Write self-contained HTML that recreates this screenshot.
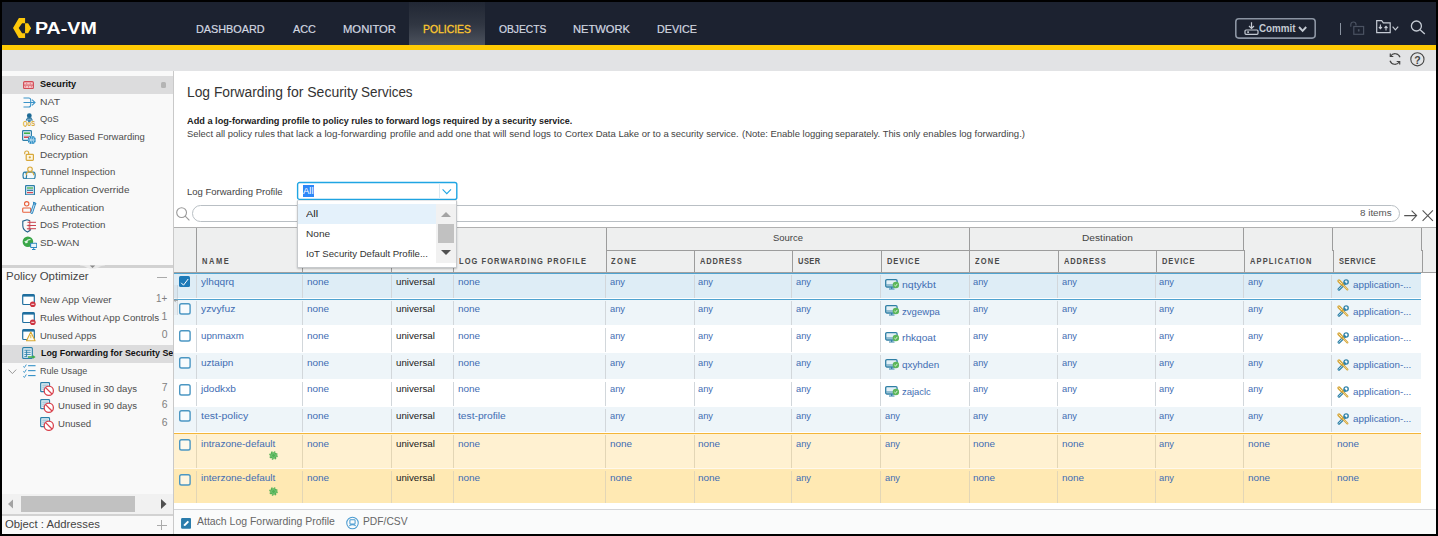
<!DOCTYPE html><html><head><meta charset="utf-8"><title>PA-VM</title><style>

html,body{margin:0;padding:0;}
body{width:1438px;height:536px;background:#000;position:relative;overflow:hidden;font-family:"Liberation Sans", sans-serif;}
#app div,#app svg,#app span{position:absolute;}
#app span{white-space:nowrap;line-height:1;}
#app span i{display:inline-block;width:0;height:0;position:static;}

</style></head><body><div id="app">
<div style="left:2px;top:2px;width:1434px;height:532px;background:#fff;"></div>
<div style="left:2px;top:2px;width:1434px;height:43px;background:#1c2230;"></div>
<div style="left:409px;top:2px;width:76px;height:43px;background:linear-gradient(#212734 0%,#303642 52%,#4c525d 100%);"></div>
<div style="left:2px;top:45px;width:1434px;height:5px;background:#ffcb05;"></div>
<div style="left:2px;top:50px;width:1434px;height:21px;background:#e2e3e5;"></div>
<svg style="left:12.9px;top:17.9px" width="18.2" height="20.4" viewBox="0 0 18.2 20.4"><path d="M5.900 0H12.100V5.200H9.100L5.700 10.100L9.100 15.300H12.100V20.300H5.900L0 10.100Z" fill="#fdc80a"/><path d="M12.100 5.200H15.100L18.100 10.100L15.100 15.300H12.100Z" fill="#fdc80a"/></svg>
<span style="left:35.13px;top:21.00px;font-size:16.8px;font-weight:700;color:#fff;transform:scaleX(1.1685);transform-origin:0 0;">PA-VM</span>
<span style="left:196.26px;top:24.00px;font-size:11px;font-weight:400;color:#d3d8e0;transform:scaleX(0.9849);transform-origin:0 0;-webkit-text-stroke:0.2px #d3d8e0;">DASHBOARD</span>
<span style="left:292.66px;top:24.00px;font-size:11px;font-weight:400;color:#d3d8e0;transform:scaleX(0.9828);transform-origin:0 0;-webkit-text-stroke:0.2px #d3d8e0;">ACC</span>
<span style="left:342.56px;top:24.00px;font-size:11px;font-weight:400;color:#d3d8e0;transform:scaleX(1.0229);transform-origin:0 0;-webkit-text-stroke:0.2px #d3d8e0;">MONITOR</span>
<span style="left:422.56px;top:24.00px;font-size:11px;font-weight:400;color:#fdc82f;transform:scaleX(0.9445);transform-origin:0 0;-webkit-text-stroke:0.3px #fdc82f;">POLICIES</span>
<span style="left:498.56px;top:24.00px;font-size:11px;font-weight:400;color:#d3d8e0;transform:scaleX(0.9350);transform-origin:0 0;-webkit-text-stroke:0.2px #d3d8e0;">OBJECTS</span>
<span style="left:572.56px;top:24.00px;font-size:11px;font-weight:400;color:#d3d8e0;transform:scaleX(1.0125);transform-origin:0 0;-webkit-text-stroke:0.2px #d3d8e0;">NETWORK</span>
<span style="left:656.56px;top:24.00px;font-size:11px;font-weight:400;color:#d3d8e0;transform:scaleX(0.9748);transform-origin:0 0;-webkit-text-stroke:0.2px #d3d8e0;">DEVICE</span>
<svg style="left:1234px;top:17px" width="83" height="23" viewBox="0 0 83 23" fill="none"><rect x="1.800" y="1.800" width="79.400" height="19.300" rx="3" stroke="#8b94a2" stroke-width="1.600"/></svg>
<svg style="left:1243.500px;top:22px" width="15" height="13" viewBox="0 0 15 13" fill="none" stroke="#c5cbd4" stroke-width="1.200"><path d="M7.500 0.300v6M5 4L7.500 6.500L10 4"/><rect x="1" y="8" width="13" height="4.300" rx="1"/><path d="M3.300 10.200h1.600" stroke-width="1.800"/></svg>
<span style="left:1259.38px;top:23.00px;font-size:10.5px;font-weight:700;color:#c5cbd4;transform:scaleX(0.9360);transform-origin:0 0;">Commit</span>
<svg style="left:1298px;top:25.500px" width="9" height="7" viewBox="0 0 9 7" fill="none" stroke="#c5cbd4" stroke-width="1.900"><path d="M1 1L4.600 4.800L8.200 1"/></svg>
<div style="left:1340px;top:23px;width:1px;height:11.5px;background:#8a93a0;"></div>
<svg style="left:1350px;top:21px" width="15" height="14" viewBox="0 0 15 14" fill="none" stroke="#4a5261" stroke-width="1.200"><path d="M0.800 5.800V3.600a2.600 2.600 0 0 1 5.200 0v1"/><rect x="3.800" y="5.500" width="9.800" height="7.800"/><path d="M8.700 8.200v2.300" stroke-width="1.600"/></svg>
<svg style="left:1375.500px;top:20px" width="15" height="13.500" viewBox="0 0 15 13.500" fill="none" stroke="#c5cbd4" stroke-width="1.200"><path d="M0.700 12.600V0.700h5l1.600 2.200h6.900v9.700z"/><path d="M4.400 4.500v4M2.900 7l1.500 1.600L5.900 7M10 10.500v-4M8.500 8L10 6.400 11.500 8" stroke-width="1.100"/></svg>
<svg style="left:1392px;top:25.500px" width="7" height="5" viewBox="0 0 7 5" fill="none" stroke="#c5cbd4" stroke-width="1.200"><path d="M0.600 0.600L3.400 3.800L6.200 0.600"/></svg>
<svg style="left:1410px;top:20px" width="16" height="16" viewBox="0 0 16 16" fill="none" stroke="#c5cbd4" stroke-width="1.300"><circle cx="6.400" cy="6" r="5"/><path d="M10.100 9.700L14.800 14"/></svg>
<svg style="left:1388px;top:52px" width="14" height="14" viewBox="0 0 14 14" fill="none" stroke="#444" stroke-width="1.200"><path d="M12 5.200A5.200 5.200 0 0 0 2.600 4.300"/><path d="M2 8.800A5.200 5.200 0 0 0 11.400 9.700"/><path d="M2.300 1.500v3h3M11.700 12.500v-3h-3"/></svg>
<svg style="left:1409.500px;top:51.600px" width="15" height="15" viewBox="0 0 15 15" fill="none" stroke="#444" stroke-width="1.100"><circle cx="7.400" cy="7.300" r="6.600"/></svg>
<span style="left:1414.20px;top:55.00px;font-size:10.5px;font-weight:700;color:#444;">?</span>
<div style="left:2px;top:71px;width:171px;height:463px;background:#f9f9f9;"></div>
<div style="left:2px;top:76px;width:171px;height:18px;background:#dcdcdd;"></div>
<div style="left:161px;top:82px;width:5px;height:6px;background:#b4b4b4;border-radius:1.500px"></div>
<span style="left:39.92px;top:79.00px;font-size:9.6px;font-weight:700;color:#111;transform:scaleX(0.9562);transform-origin:0 0;">Security</span>
<span style="left:39.92px;top:97.00px;font-size:9.6px;font-weight:400;color:#4d4d4d;transform:scaleX(1.0829);transform-origin:0 0;">NAT</span>
<span style="left:39.92px;top:114.00px;font-size:9.6px;font-weight:400;color:#4d4d4d;transform:scaleX(0.9694);transform-origin:0 0;">QoS</span>
<span style="left:39.92px;top:132.00px;font-size:9.6px;font-weight:400;color:#4d4d4d;transform:scaleX(0.9877);transform-origin:0 0;">Policy Based Forwarding</span>
<span style="left:39.92px;top:150.00px;font-size:9.6px;font-weight:400;color:#4d4d4d;transform:scaleX(1.0427);transform-origin:0 0;">Decryption</span>
<span style="left:39.92px;top:167.00px;font-size:9.6px;font-weight:400;color:#4d4d4d;transform:scaleX(0.9977);transform-origin:0 0;">Tunnel Inspection</span>
<span style="left:39.92px;top:185.00px;font-size:9.6px;font-weight:400;color:#4d4d4d;transform:scaleX(1.0350);transform-origin:0 0;">Application Override</span>
<span style="left:39.92px;top:203.00px;font-size:9.6px;font-weight:400;color:#4d4d4d;transform:scaleX(1.0560);transform-origin:0 0;">Authentication</span>
<span style="left:39.92px;top:220.00px;font-size:9.6px;font-weight:400;color:#4d4d4d;transform:scaleX(1.0153);transform-origin:0 0;">DoS Protection</span>
<span style="left:39.92px;top:238.00px;font-size:9.6px;font-weight:400;color:#4d4d4d;transform:scaleX(1.0221);transform-origin:0 0;">SD-WAN</span>
<div style="left:2px;top:265px;width:171px;height:3px;background:#d2d2d2;"></div>
<svg style="left:80px;top:264px" width="25" height="5" viewBox="0 0 25 5"><path d="M0 1.500C6 1.500 6 4.800 12.500 4.800S19 1.500 25 1.500V1H0z" fill="#e9e9e9"/><path d="M9.800 1.500h5.400L12.500 4z" fill="#8a8a8a"/></svg>
<span style="left:5.85px;top:271.00px;font-size:11.2px;font-weight:400;color:#444;transform:scaleX(1.0226);transform-origin:0 0;">Policy Optimizer</span>
<div style="left:157px;top:276.5px;width:9.5px;height:1px;background:#aaa;"></div>
<span style="left:40.32px;top:295.00px;font-size:9.6px;font-weight:400;color:#4d4d4d;transform:scaleX(1.0199);transform-origin:0 0;">New App Viewer</span>
<span style="left:156.03px;top:294.00px;font-size:10.4px;font-weight:400;color:#808080;transform:scaleX(0.9500);transform-origin:0 0;">1+</span>
<span style="left:40.32px;top:313.00px;font-size:9.6px;font-weight:400;color:#4d4d4d;transform:scaleX(1.0154);transform-origin:0 0;">Rules Without App Controls</span>
<span style="left:161.52px;top:312.00px;font-size:10.4px;font-weight:400;color:#808080;">1</span>
<span style="left:40.32px;top:331.00px;font-size:9.6px;font-weight:400;color:#4d4d4d;transform:scaleX(0.9884);transform-origin:0 0;">Unused Apps</span>
<span style="left:161.82px;top:330.00px;font-size:10.4px;font-weight:400;color:#808080;">0</span>
<div style="left:2px;top:345px;width:171px;height:17.5px;background:#dcdcdd;"></div>
<span style="left:40.60px;top:348.00px;font-size:9.6px;font-weight:700;color:#111;transform:scaleX(0.9260);transform-origin:0 0;">Log Forwarding for Security Services</span>
<span style="left:40.22px;top:366.00px;font-size:9.6px;font-weight:400;color:#4d4d4d;transform:scaleX(0.9417);transform-origin:0 0;">Rule Usage</span>
<svg style="left:8px;top:369px" width="9" height="6" viewBox="0 0 9 6" fill="none" stroke="#9a9a9a" stroke-width="1"><path d="M0.600 0.600L4.400 4.600L8.200 0.600"/></svg>
<span style="left:57.52px;top:384.00px;font-size:9.6px;font-weight:400;color:#4d4d4d;transform:scaleX(0.9930);transform-origin:0 0;">Unused in 30 days</span>
<span style="left:161.72px;top:383.00px;font-size:10.4px;font-weight:400;color:#808080;">7</span>
<span style="left:57.52px;top:401.00px;font-size:9.6px;font-weight:400;color:#4d4d4d;transform:scaleX(0.9930);transform-origin:0 0;">Unused in 90 days</span>
<span style="left:161.72px;top:400.00px;font-size:10.4px;font-weight:400;color:#808080;">6</span>
<span style="left:57.52px;top:419.00px;font-size:9.6px;font-weight:400;color:#4d4d4d;transform:scaleX(1.0011);transform-origin:0 0;">Unused</span>
<span style="left:161.72px;top:418.00px;font-size:10.4px;font-weight:400;color:#808080;">6</span>
<div style="left:2px;top:494px;width:171px;height:20px;background:#f1f1f1;"></div>
<div style="left:21px;top:496px;width:114px;height:15.5px;background:#c1c1c1;"></div>
<svg style="left:7.800px;top:499px" width="5.500" height="10" viewBox="0 0 5.500 10"><path d="M5.500 0L0 5l5.500 5z" fill="#a3a3a3"/></svg>
<svg style="left:161px;top:499px" width="5.500" height="10" viewBox="0 0 5.500 10"><path d="M0 0L5.500 5l-5.500 5z" fill="#505050"/></svg>
<div style="left:2px;top:514px;width:171px;height:2px;background:#d2d2d2;"></div>
<span style="left:5.16px;top:519.00px;font-size:11px;font-weight:400;color:#444;transform:scaleX(1.0272);transform-origin:0 0;">Object : Addresses</span>
<div style="left:157px;top:524.5px;width:9.5px;height:1px;background:#aaa;"></div>
<div style="left:161.3px;top:520px;width:1px;height:10px;background:#aaa;"></div>
<div style="left:173px;top:71px;width:1263px;height:463px;background:#fff;"></div>
<div style="left:173px;top:71px;width:1px;height:463px;background:#c9c9c9;"></div>
<span style="left:186.94px;top:85.00px;font-size:14px;font-weight:400;color:#333;transform:scaleX(0.9867);transform-origin:0 0;">Log Forwarding</span>
<span style="left:286.74px;top:85.00px;font-size:14px;font-weight:400;color:#333;transform:scaleX(1.0011);transform-origin:0 0;">for Security</span>
<span style="left:361.44px;top:85.00px;font-size:14px;font-weight:400;color:#333;transform:scaleX(0.9609);transform-origin:0 0;">Services</span>
<span style="left:186.62px;top:116.00px;font-size:9.6px;font-weight:700;color:#222;transform:scaleX(0.9580);transform-origin:0 0;">Add a log-forwarding</span>
<span style="left:281.82px;top:116.00px;font-size:9.6px;font-weight:700;color:#222;transform:scaleX(0.9349);transform-origin:0 0;">profile to policy rules</span>
<span style="left:375.32px;top:116.00px;font-size:9.6px;font-weight:700;color:#222;transform:scaleX(0.9445);transform-origin:0 0;">to forward logs required</span>
<span style="left:482.32px;top:116.00px;font-size:9.6px;font-weight:700;color:#222;transform:scaleX(0.9283);transform-origin:0 0;">by a security service.</span>
<span style="left:186.62px;top:129.00px;font-size:9.6px;font-weight:400;color:#444;transform:scaleX(0.9813);transform-origin:0 0;">Select all policy rules</span>
<span style="left:277.32px;top:129.00px;font-size:9.6px;font-weight:400;color:#444;transform:scaleX(1.0217);transform-origin:0 0;">that lack a log-forwarding</span>
<span style="left:389.62px;top:129.00px;font-size:9.6px;font-weight:400;color:#444;transform:scaleX(0.9922);transform-origin:0 0;">profile and add one</span>
<span style="left:473.92px;top:129.00px;font-size:9.6px;font-weight:400;color:#444;transform:scaleX(1.0165);transform-origin:0 0;">that will send logs to</span>
<span style="left:564.52px;top:129.00px;font-size:9.6px;font-weight:400;color:#444;transform:scaleX(0.9922);transform-origin:0 0;">Cortex Data Lake or to a</span>
<span style="left:671.02px;top:129.00px;font-size:9.6px;font-weight:400;color:#444;transform:scaleX(0.9845);transform-origin:0 0;">security service.</span>
<span style="left:741.52px;top:129.00px;font-size:9.6px;font-weight:400;color:#444;transform:scaleX(0.9874);transform-origin:0 0;">(Note: Enable logging</span>
<span style="left:835.42px;top:129.00px;font-size:9.6px;font-weight:400;color:#444;transform:scaleX(0.9783);transform-origin:0 0;">separately. This only</span>
<span style="left:923.42px;top:129.00px;font-size:9.6px;font-weight:400;color:#444;transform:scaleX(0.9962);transform-origin:0 0;">enables log forwarding.)</span>
<span style="left:187.02px;top:187.00px;font-size:9.6px;font-weight:400;color:#444;transform:scaleX(0.9905);transform-origin:0 0;">Log Forwarding Profile</span>
<svg style="left:176px;top:207px" width="14" height="14" viewBox="0 0 14 14" fill="none" stroke="#999" stroke-width="1.100"><circle cx="5.600" cy="5.600" r="4.900"/><path d="M9.200 9.200L13.400 13.400"/></svg>
<div style="left:192px;top:205px;width:1206px;height:15px;border:1px solid #b9bfc4;border-radius:9px;background:#fff"></div>
<span style="left:1359.62px;top:208.00px;font-size:9.6px;font-weight:400;color:#555;transform:scaleX(1.0252);transform-origin:0 0;">8 items</span>
<svg style="left:1404px;top:210px" width="13.500" height="11.500" viewBox="0 0 13.500 11.500" fill="none" stroke="#555" stroke-width="1.100"><path d="M0.200 5.600h12.300M7.600 0.600l5 5L7.600 10.800"/></svg>
<svg style="left:1422px;top:210px" width="11.500" height="11.500" viewBox="0 0 11.500 11.500" fill="none" stroke="#555" stroke-width="1.100"><path d="M0.600 0.400L10.900 10.800M10.900 0.400L0.600 10.800"/></svg>
<div style="left:174px;top:227px;width:1262px;height:46px;background:#eeefef;"></div>
<div style="left:174px;top:227px;width:1262px;height:1px;background:#b0b0b0;"></div>
<div style="left:174px;top:272px;width:1262px;height:1px;background:#a0a0a0;"></div>
<div style="left:196px;top:228px;width:1px;height:44px;background:#9c9c9c;"></div>
<div style="left:302px;top:228px;width:1px;height:44px;background:#9c9c9c;"></div>
<div style="left:391px;top:228px;width:1px;height:44px;background:#9c9c9c;"></div>
<div style="left:453px;top:228px;width:1px;height:44px;background:#9c9c9c;"></div>
<div style="left:606px;top:228px;width:1px;height:44px;background:#9c9c9c;"></div>
<div style="left:969px;top:228px;width:1px;height:44px;background:#9c9c9c;"></div>
<div style="left:1243px;top:228px;width:1px;height:23px;background:#9c9c9c;"></div>
<div style="left:1244px;top:250px;width:1px;height:22px;background:#9c9c9c;"></div>
<div style="left:1332px;top:228px;width:1px;height:23px;background:#9c9c9c;"></div>
<div style="left:1333px;top:250px;width:1px;height:22px;background:#9c9c9c;"></div>
<div style="left:1421px;top:228px;width:1px;height:23px;background:#9c9c9c;"></div>
<div style="left:1422px;top:250px;width:1px;height:22px;background:#9c9c9c;"></div>
<div style="left:694px;top:250px;width:1px;height:22px;background:#9c9c9c;"></div>
<div style="left:792px;top:250px;width:1px;height:22px;background:#9c9c9c;"></div>
<div style="left:881px;top:250px;width:1px;height:22px;background:#9c9c9c;"></div>
<div style="left:1058px;top:250px;width:1px;height:22px;background:#9c9c9c;"></div>
<div style="left:1156px;top:250px;width:1px;height:22px;background:#9c9c9c;"></div>
<div style="left:606px;top:250px;width:638px;height:1px;background:#9c9c9c;"></div>
<span style="left:201.76px;top:257.00px;font-size:8.6px;font-weight:700;color:#4a4a4a;letter-spacing:1.804px;transform:scaleX(0.8700);transform-origin:0 0;">NAME</span>
<span style="left:459.11px;top:257.00px;font-size:8.6px;font-weight:700;color:#4a4a4a;letter-spacing:1.226px;transform:scaleX(0.8700);transform-origin:0 0;">LOG FORWARDING PROFILE</span>
<span style="left:611.11px;top:257.00px;font-size:8.6px;font-weight:700;color:#4a4a4a;letter-spacing:1.594px;transform:scaleX(0.8700);transform-origin:0 0;">ZONE</span>
<span style="left:699.86px;top:257.00px;font-size:8.6px;font-weight:700;color:#4a4a4a;letter-spacing:0.980px;transform:scaleX(0.8700);transform-origin:0 0;">ADDRESS</span>
<span style="left:798.06px;top:257.00px;font-size:8.6px;font-weight:700;color:#4a4a4a;letter-spacing:0.554px;transform:scaleX(0.8700);transform-origin:0 0;">USER</span>
<span style="left:886.86px;top:257.00px;font-size:8.6px;font-weight:700;color:#4a4a4a;letter-spacing:1.055px;transform:scaleX(0.8700);transform-origin:0 0;">DEVICE</span>
<span style="left:975.36px;top:257.00px;font-size:8.6px;font-weight:700;color:#4a4a4a;letter-spacing:1.402px;transform:scaleX(0.8700);transform-origin:0 0;">ZONE</span>
<span style="left:1063.61px;top:257.00px;font-size:8.6px;font-weight:700;color:#4a4a4a;letter-spacing:0.980px;transform:scaleX(0.8700);transform-origin:0 0;">ADDRESS</span>
<span style="left:1161.61px;top:257.00px;font-size:8.6px;font-weight:700;color:#4a4a4a;letter-spacing:1.055px;transform:scaleX(0.8700);transform-origin:0 0;">DEVICE</span>
<span style="left:1250.11px;top:257.00px;font-size:8.6px;font-weight:700;color:#4a4a4a;letter-spacing:1.300px;transform:scaleX(0.8700);transform-origin:0 0;">APPLICATION</span>
<span style="left:1338.86px;top:257.00px;font-size:8.6px;font-weight:700;color:#4a4a4a;letter-spacing:0.716px;transform:scaleX(0.8700);transform-origin:0 0;">SERVICE</span>
<span style="left:773.42px;top:233.00px;font-size:9.6px;font-weight:400;color:#444;transform:scaleX(0.9872);transform-origin:0 0;">Source</span>
<span style="left:1081.62px;top:233.00px;font-size:9.6px;font-weight:400;color:#444;transform:scaleX(1.0587);transform-origin:0 0;">Destination</span>
<div style="left:174px;top:273px;width:1247px;height:26px;background:#deedf6;"></div>
<div style="left:174px;top:298px;width:1247px;height:1px;background:#fff;"></div>
<div style="left:196px;top:274.5px;width:1px;height:23px;background:#d2d7db;"></div>
<div style="left:302px;top:274.5px;width:1px;height:23px;background:#d2d7db;"></div>
<div style="left:391px;top:274.5px;width:1px;height:23px;background:#d2d7db;"></div>
<div style="left:453px;top:274.5px;width:1px;height:23px;background:#d2d7db;"></div>
<div style="left:605px;top:274.5px;width:1px;height:23px;background:#d2d7db;"></div>
<div style="left:694px;top:274.5px;width:1px;height:23px;background:#d2d7db;"></div>
<div style="left:791px;top:274.5px;width:1px;height:23px;background:#d2d7db;"></div>
<div style="left:880px;top:274.5px;width:1px;height:23px;background:#d2d7db;"></div>
<div style="left:969px;top:274.5px;width:1px;height:23px;background:#d2d7db;"></div>
<div style="left:1057px;top:274.5px;width:1px;height:23px;background:#d2d7db;"></div>
<div style="left:1155px;top:274.5px;width:1px;height:23px;background:#d2d7db;"></div>
<div style="left:1243px;top:274.5px;width:1px;height:23px;background:#d2d7db;"></div>
<div style="left:1331px;top:274.5px;width:1px;height:23px;background:#d2d7db;"></div>
<div style="left:178.800px;top:276.2px;width:11.200px;height:11.200px;background:#1d7ab8;border-radius:1.500px"></div>
<svg style="left:180.200px;top:277.7px" width="9" height="8" viewBox="0 0 9 8" fill="none" stroke="#fff" stroke-width="1"><path d="M1.200 4.800L3.500 7.200L8.200 1"/></svg>
<span style="left:200.62px;top:277.00px;font-size:9.6px;font-weight:400;color:#3f6db3;transform:scaleX(1.0523);transform-origin:0 0;">ylhqqrq</span>
<span style="left:307.22px;top:277.00px;font-size:9.6px;font-weight:400;color:#3f6db3;transform:scaleX(1.0362);transform-origin:0 0;">none</span>
<span style="left:395.62px;top:277.00px;font-size:9.6px;font-weight:400;color:#222;transform:scaleX(1.0107);transform-origin:0 0;">universal</span>
<span style="left:457.87px;top:277.00px;font-size:9.6px;font-weight:400;color:#3f6db3;transform:scaleX(1.0362);transform-origin:0 0;">none</span>
<span style="left:610.37px;top:277.00px;font-size:9.6px;font-weight:400;color:#3f6db3;transform:scaleX(0.9707);transform-origin:0 0;">any</span>
<span style="left:698.37px;top:277.00px;font-size:9.6px;font-weight:400;color:#3f6db3;transform:scaleX(0.9707);transform-origin:0 0;">any</span>
<span style="left:796.42px;top:277.00px;font-size:9.6px;font-weight:400;color:#3f6db3;transform:scaleX(0.9707);transform-origin:0 0;">any</span>
<svg style="left:885px;top:279.4px" width="14.500" height="11" viewBox="0 0 14.500 11" fill="none"><rect x="0.700" y="0.700" width="11.400" height="7.300" rx="1.200" stroke="#2f7fa5" stroke-width="1.300" fill="#e3f0f6"/><path d="M1.200 6h10" stroke="#2f7fa5" stroke-width="0.900"/><path d="M4 10h5.500M6.700 8v2" stroke="#2f7fa5" stroke-width="1.200"/><circle cx="10.900" cy="6" r="3.200" fill="#5cb65a"/><path d="M9.400 6.100l1.100 1.100 1.800-2.300" stroke="#e9f7e8" stroke-width="0.900"/></svg>
<span style="left:902.42px;top:280.00px;font-size:9.6px;font-weight:400;color:#3f6db3;transform:scaleX(1.0930);transform-origin:0 0;">nqtykbt</span>
<span style="left:972.87px;top:277.00px;font-size:9.6px;font-weight:400;color:#3f6db3;transform:scaleX(0.9707);transform-origin:0 0;">any</span>
<span style="left:1061.62px;top:277.00px;font-size:9.6px;font-weight:400;color:#3f6db3;transform:scaleX(0.9707);transform-origin:0 0;">any</span>
<span style="left:1159.37px;top:277.00px;font-size:9.6px;font-weight:400;color:#3f6db3;transform:scaleX(0.9707);transform-origin:0 0;">any</span>
<span style="left:1248.12px;top:277.00px;font-size:9.6px;font-weight:400;color:#3f6db3;transform:scaleX(0.9707);transform-origin:0 0;">any</span>
<svg style="left:1337.400px;top:279.3px" width="12.500" height="12" viewBox="0 0 12.500 12" fill="none"><path d="M2 10.200L7.600 4.600" stroke="#2f82a8" stroke-width="2.900" stroke-linecap="round"/><path d="M2 10.200L7.600 4.600" stroke="#d5e8f1" stroke-width="0.900" stroke-linecap="round"/><circle cx="9.100" cy="3" r="2.100" stroke="#2f82a8" stroke-width="1.400"/><path d="M2 2L4.800 4.800" stroke="#d6a73a" stroke-width="3.200" stroke-linecap="round"/><path d="M2 2L4.800 4.800" stroke="#f6e6bd" stroke-width="1" stroke-linecap="round"/><path d="M5.500 5.500L10.400 10.400" stroke="#d6a73a" stroke-width="2.100" stroke-linecap="round"/><path d="M6.500 6.500L10.200 10.200" stroke="#f6e6bd" stroke-width="0.600" stroke-linecap="round"/></svg>
<span style="left:1353.12px;top:280.00px;font-size:9.6px;font-weight:400;color:#3f6db3;transform:scaleX(1.0220);transform-origin:0 0;">application-...</span>
<div style="left:174px;top:299px;width:1247px;height:27px;background:#eef5f9;"></div>
<div style="left:174px;top:325px;width:1247px;height:1px;background:#fff;"></div>
<div style="left:196px;top:300.5px;width:1px;height:24px;background:#d2d7db;"></div>
<div style="left:302px;top:300.5px;width:1px;height:24px;background:#d2d7db;"></div>
<div style="left:391px;top:300.5px;width:1px;height:24px;background:#d2d7db;"></div>
<div style="left:453px;top:300.5px;width:1px;height:24px;background:#d2d7db;"></div>
<div style="left:605px;top:300.5px;width:1px;height:24px;background:#d2d7db;"></div>
<div style="left:694px;top:300.5px;width:1px;height:24px;background:#d2d7db;"></div>
<div style="left:791px;top:300.5px;width:1px;height:24px;background:#d2d7db;"></div>
<div style="left:880px;top:300.5px;width:1px;height:24px;background:#d2d7db;"></div>
<div style="left:969px;top:300.5px;width:1px;height:24px;background:#d2d7db;"></div>
<div style="left:1057px;top:300.5px;width:1px;height:24px;background:#d2d7db;"></div>
<div style="left:1155px;top:300.5px;width:1px;height:24px;background:#d2d7db;"></div>
<div style="left:1243px;top:300.5px;width:1px;height:24px;background:#d2d7db;"></div>
<div style="left:1331px;top:300.5px;width:1px;height:24px;background:#d2d7db;"></div>
<svg style="left:178px;top:302.400px" width="14" height="14" viewBox="0 0 14 14" fill="none"><rect x="1.700" y="1.700" width="10.400" height="10.300" rx="1.800" fill="rgba(255,255,255,0.600)" stroke="#4b97c3" stroke-width="1.400"/></svg>
<span style="left:200.62px;top:304.00px;font-size:9.6px;font-weight:400;color:#3f6db3;transform:scaleX(1.0724);transform-origin:0 0;">yzvyfuz</span>
<span style="left:307.22px;top:304.00px;font-size:9.6px;font-weight:400;color:#3f6db3;transform:scaleX(1.0362);transform-origin:0 0;">none</span>
<span style="left:395.62px;top:304.00px;font-size:9.6px;font-weight:400;color:#222;transform:scaleX(1.0107);transform-origin:0 0;">universal</span>
<span style="left:457.87px;top:304.00px;font-size:9.6px;font-weight:400;color:#3f6db3;transform:scaleX(1.0362);transform-origin:0 0;">none</span>
<span style="left:610.37px;top:304.00px;font-size:9.6px;font-weight:400;color:#3f6db3;transform:scaleX(0.9707);transform-origin:0 0;">any</span>
<span style="left:698.37px;top:304.00px;font-size:9.6px;font-weight:400;color:#3f6db3;transform:scaleX(0.9707);transform-origin:0 0;">any</span>
<span style="left:796.42px;top:304.00px;font-size:9.6px;font-weight:400;color:#3f6db3;transform:scaleX(0.9707);transform-origin:0 0;">any</span>
<svg style="left:885px;top:305.4px" width="14.500" height="11" viewBox="0 0 14.500 11" fill="none"><rect x="0.700" y="0.700" width="11.400" height="7.300" rx="1.200" stroke="#2f7fa5" stroke-width="1.300" fill="#e3f0f6"/><path d="M1.200 6h10" stroke="#2f7fa5" stroke-width="0.900"/><path d="M4 10h5.500M6.700 8v2" stroke="#2f7fa5" stroke-width="1.200"/><circle cx="10.900" cy="6" r="3.200" fill="#5cb65a"/><path d="M9.400 6.100l1.100 1.100 1.800-2.300" stroke="#e9f7e8" stroke-width="0.900"/></svg>
<span style="left:902.42px;top:307.00px;font-size:9.6px;font-weight:400;color:#3f6db3;transform:scaleX(0.9984);transform-origin:0 0;">zvgewpa</span>
<span style="left:972.87px;top:304.00px;font-size:9.6px;font-weight:400;color:#3f6db3;transform:scaleX(0.9707);transform-origin:0 0;">any</span>
<span style="left:1061.62px;top:304.00px;font-size:9.6px;font-weight:400;color:#3f6db3;transform:scaleX(0.9707);transform-origin:0 0;">any</span>
<span style="left:1159.37px;top:304.00px;font-size:9.6px;font-weight:400;color:#3f6db3;transform:scaleX(0.9707);transform-origin:0 0;">any</span>
<span style="left:1248.12px;top:304.00px;font-size:9.6px;font-weight:400;color:#3f6db3;transform:scaleX(0.9707);transform-origin:0 0;">any</span>
<svg style="left:1337.400px;top:305.3px" width="12.500" height="12" viewBox="0 0 12.500 12" fill="none"><path d="M2 10.200L7.600 4.600" stroke="#2f82a8" stroke-width="2.900" stroke-linecap="round"/><path d="M2 10.200L7.600 4.600" stroke="#d5e8f1" stroke-width="0.900" stroke-linecap="round"/><circle cx="9.100" cy="3" r="2.100" stroke="#2f82a8" stroke-width="1.400"/><path d="M2 2L4.800 4.800" stroke="#d6a73a" stroke-width="3.200" stroke-linecap="round"/><path d="M2 2L4.800 4.800" stroke="#f6e6bd" stroke-width="1" stroke-linecap="round"/><path d="M5.500 5.500L10.400 10.400" stroke="#d6a73a" stroke-width="2.100" stroke-linecap="round"/><path d="M6.500 6.500L10.200 10.200" stroke="#f6e6bd" stroke-width="0.600" stroke-linecap="round"/></svg>
<span style="left:1353.12px;top:307.00px;font-size:9.6px;font-weight:400;color:#3f6db3;transform:scaleX(1.0220);transform-origin:0 0;">application-...</span>
<div style="left:174px;top:326px;width:1247px;height:27px;background:#ffffff;"></div>
<div style="left:174px;top:352px;width:1247px;height:1px;background:#fff;"></div>
<div style="left:196px;top:327.5px;width:1px;height:24px;background:#d2d7db;"></div>
<div style="left:302px;top:327.5px;width:1px;height:24px;background:#d2d7db;"></div>
<div style="left:391px;top:327.5px;width:1px;height:24px;background:#d2d7db;"></div>
<div style="left:453px;top:327.5px;width:1px;height:24px;background:#d2d7db;"></div>
<div style="left:605px;top:327.5px;width:1px;height:24px;background:#d2d7db;"></div>
<div style="left:694px;top:327.5px;width:1px;height:24px;background:#d2d7db;"></div>
<div style="left:791px;top:327.5px;width:1px;height:24px;background:#d2d7db;"></div>
<div style="left:880px;top:327.5px;width:1px;height:24px;background:#d2d7db;"></div>
<div style="left:969px;top:327.5px;width:1px;height:24px;background:#d2d7db;"></div>
<div style="left:1057px;top:327.5px;width:1px;height:24px;background:#d2d7db;"></div>
<div style="left:1155px;top:327.5px;width:1px;height:24px;background:#d2d7db;"></div>
<div style="left:1243px;top:327.5px;width:1px;height:24px;background:#d2d7db;"></div>
<div style="left:1331px;top:327.5px;width:1px;height:24px;background:#d2d7db;"></div>
<svg style="left:178px;top:329.100px" width="14" height="14" viewBox="0 0 14 14" fill="none"><rect x="1.700" y="1.700" width="10.400" height="10.300" rx="1.800" fill="rgba(255,255,255,0.600)" stroke="#4b97c3" stroke-width="1.400"/></svg>
<span style="left:200.62px;top:331.00px;font-size:9.6px;font-weight:400;color:#3f6db3;transform:scaleX(1.0164);transform-origin:0 0;">upnmaxm</span>
<span style="left:307.22px;top:331.00px;font-size:9.6px;font-weight:400;color:#3f6db3;transform:scaleX(1.0362);transform-origin:0 0;">none</span>
<span style="left:395.62px;top:331.00px;font-size:9.6px;font-weight:400;color:#222;transform:scaleX(1.0107);transform-origin:0 0;">universal</span>
<span style="left:457.87px;top:331.00px;font-size:9.6px;font-weight:400;color:#3f6db3;transform:scaleX(1.0362);transform-origin:0 0;">none</span>
<span style="left:610.37px;top:331.00px;font-size:9.6px;font-weight:400;color:#3f6db3;transform:scaleX(0.9707);transform-origin:0 0;">any</span>
<span style="left:698.37px;top:331.00px;font-size:9.6px;font-weight:400;color:#3f6db3;transform:scaleX(0.9707);transform-origin:0 0;">any</span>
<span style="left:796.42px;top:331.00px;font-size:9.6px;font-weight:400;color:#3f6db3;transform:scaleX(0.9707);transform-origin:0 0;">any</span>
<svg style="left:885px;top:332.4px" width="14.500" height="11" viewBox="0 0 14.500 11" fill="none"><rect x="0.700" y="0.700" width="11.400" height="7.300" rx="1.200" stroke="#2f7fa5" stroke-width="1.300" fill="#e3f0f6"/><path d="M1.200 6h10" stroke="#2f7fa5" stroke-width="0.900"/><path d="M4 10h5.500M6.700 8v2" stroke="#2f7fa5" stroke-width="1.200"/><circle cx="10.900" cy="6" r="3.200" fill="#5cb65a"/><path d="M9.400 6.100l1.100 1.100 1.800-2.300" stroke="#e9f7e8" stroke-width="0.900"/></svg>
<span style="left:902.42px;top:333.00px;font-size:9.6px;font-weight:400;color:#3f6db3;transform:scaleX(1.0568);transform-origin:0 0;">rhkqoat</span>
<span style="left:972.87px;top:331.00px;font-size:9.6px;font-weight:400;color:#3f6db3;transform:scaleX(0.9707);transform-origin:0 0;">any</span>
<span style="left:1061.62px;top:331.00px;font-size:9.6px;font-weight:400;color:#3f6db3;transform:scaleX(0.9707);transform-origin:0 0;">any</span>
<span style="left:1159.37px;top:331.00px;font-size:9.6px;font-weight:400;color:#3f6db3;transform:scaleX(0.9707);transform-origin:0 0;">any</span>
<span style="left:1248.12px;top:331.00px;font-size:9.6px;font-weight:400;color:#3f6db3;transform:scaleX(0.9707);transform-origin:0 0;">any</span>
<svg style="left:1337.400px;top:332.3px" width="12.500" height="12" viewBox="0 0 12.500 12" fill="none"><path d="M2 10.200L7.600 4.600" stroke="#2f82a8" stroke-width="2.900" stroke-linecap="round"/><path d="M2 10.200L7.600 4.600" stroke="#d5e8f1" stroke-width="0.900" stroke-linecap="round"/><circle cx="9.100" cy="3" r="2.100" stroke="#2f82a8" stroke-width="1.400"/><path d="M2 2L4.800 4.800" stroke="#d6a73a" stroke-width="3.200" stroke-linecap="round"/><path d="M2 2L4.800 4.800" stroke="#f6e6bd" stroke-width="1" stroke-linecap="round"/><path d="M5.500 5.500L10.400 10.400" stroke="#d6a73a" stroke-width="2.100" stroke-linecap="round"/><path d="M6.500 6.500L10.200 10.200" stroke="#f6e6bd" stroke-width="0.600" stroke-linecap="round"/></svg>
<span style="left:1353.12px;top:333.00px;font-size:9.6px;font-weight:400;color:#3f6db3;transform:scaleX(1.0220);transform-origin:0 0;">application-...</span>
<div style="left:174px;top:353px;width:1247px;height:27px;background:#eef5f9;"></div>
<div style="left:174px;top:379px;width:1247px;height:1px;background:#fff;"></div>
<div style="left:196px;top:354.5px;width:1px;height:24px;background:#d2d7db;"></div>
<div style="left:302px;top:354.5px;width:1px;height:24px;background:#d2d7db;"></div>
<div style="left:391px;top:354.5px;width:1px;height:24px;background:#d2d7db;"></div>
<div style="left:453px;top:354.5px;width:1px;height:24px;background:#d2d7db;"></div>
<div style="left:605px;top:354.5px;width:1px;height:24px;background:#d2d7db;"></div>
<div style="left:694px;top:354.5px;width:1px;height:24px;background:#d2d7db;"></div>
<div style="left:791px;top:354.5px;width:1px;height:24px;background:#d2d7db;"></div>
<div style="left:880px;top:354.5px;width:1px;height:24px;background:#d2d7db;"></div>
<div style="left:969px;top:354.5px;width:1px;height:24px;background:#d2d7db;"></div>
<div style="left:1057px;top:354.5px;width:1px;height:24px;background:#d2d7db;"></div>
<div style="left:1155px;top:354.5px;width:1px;height:24px;background:#d2d7db;"></div>
<div style="left:1243px;top:354.5px;width:1px;height:24px;background:#d2d7db;"></div>
<div style="left:1331px;top:354.5px;width:1px;height:24px;background:#d2d7db;"></div>
<svg style="left:178px;top:355.800px" width="14" height="14" viewBox="0 0 14 14" fill="none"><rect x="1.700" y="1.700" width="10.400" height="10.300" rx="1.800" fill="rgba(255,255,255,0.600)" stroke="#4b97c3" stroke-width="1.400"/></svg>
<span style="left:200.62px;top:358.00px;font-size:9.6px;font-weight:400;color:#3f6db3;transform:scaleX(1.0446);transform-origin:0 0;">uztaipn</span>
<span style="left:307.22px;top:358.00px;font-size:9.6px;font-weight:400;color:#3f6db3;transform:scaleX(1.0362);transform-origin:0 0;">none</span>
<span style="left:395.62px;top:358.00px;font-size:9.6px;font-weight:400;color:#222;transform:scaleX(1.0107);transform-origin:0 0;">universal</span>
<span style="left:457.87px;top:358.00px;font-size:9.6px;font-weight:400;color:#3f6db3;transform:scaleX(1.0362);transform-origin:0 0;">none</span>
<span style="left:610.37px;top:358.00px;font-size:9.6px;font-weight:400;color:#3f6db3;transform:scaleX(0.9707);transform-origin:0 0;">any</span>
<span style="left:698.37px;top:358.00px;font-size:9.6px;font-weight:400;color:#3f6db3;transform:scaleX(0.9707);transform-origin:0 0;">any</span>
<span style="left:796.42px;top:358.00px;font-size:9.6px;font-weight:400;color:#3f6db3;transform:scaleX(0.9707);transform-origin:0 0;">any</span>
<svg style="left:885px;top:359.4px" width="14.500" height="11" viewBox="0 0 14.500 11" fill="none"><rect x="0.700" y="0.700" width="11.400" height="7.300" rx="1.200" stroke="#2f7fa5" stroke-width="1.300" fill="#e3f0f6"/><path d="M1.200 6h10" stroke="#2f7fa5" stroke-width="0.900"/><path d="M4 10h5.500M6.700 8v2" stroke="#2f7fa5" stroke-width="1.200"/><circle cx="10.900" cy="6" r="3.200" fill="#5cb65a"/><path d="M9.400 6.100l1.100 1.100 1.800-2.300" stroke="#e9f7e8" stroke-width="0.900"/></svg>
<span style="left:902.42px;top:360.00px;font-size:9.6px;font-weight:400;color:#3f6db3;transform:scaleX(1.0285);transform-origin:0 0;">qxyhden</span>
<span style="left:972.87px;top:358.00px;font-size:9.6px;font-weight:400;color:#3f6db3;transform:scaleX(0.9707);transform-origin:0 0;">any</span>
<span style="left:1061.62px;top:358.00px;font-size:9.6px;font-weight:400;color:#3f6db3;transform:scaleX(0.9707);transform-origin:0 0;">any</span>
<span style="left:1159.37px;top:358.00px;font-size:9.6px;font-weight:400;color:#3f6db3;transform:scaleX(0.9707);transform-origin:0 0;">any</span>
<span style="left:1248.12px;top:358.00px;font-size:9.6px;font-weight:400;color:#3f6db3;transform:scaleX(0.9707);transform-origin:0 0;">any</span>
<svg style="left:1337.400px;top:359.3px" width="12.500" height="12" viewBox="0 0 12.500 12" fill="none"><path d="M2 10.200L7.600 4.600" stroke="#2f82a8" stroke-width="2.900" stroke-linecap="round"/><path d="M2 10.200L7.600 4.600" stroke="#d5e8f1" stroke-width="0.900" stroke-linecap="round"/><circle cx="9.100" cy="3" r="2.100" stroke="#2f82a8" stroke-width="1.400"/><path d="M2 2L4.800 4.800" stroke="#d6a73a" stroke-width="3.200" stroke-linecap="round"/><path d="M2 2L4.800 4.800" stroke="#f6e6bd" stroke-width="1" stroke-linecap="round"/><path d="M5.500 5.500L10.400 10.400" stroke="#d6a73a" stroke-width="2.100" stroke-linecap="round"/><path d="M6.500 6.500L10.200 10.200" stroke="#f6e6bd" stroke-width="0.600" stroke-linecap="round"/></svg>
<span style="left:1353.12px;top:360.00px;font-size:9.6px;font-weight:400;color:#3f6db3;transform:scaleX(1.0220);transform-origin:0 0;">application-...</span>
<div style="left:174px;top:380px;width:1247px;height:27px;background:#ffffff;"></div>
<div style="left:174px;top:406px;width:1247px;height:1px;background:#fff;"></div>
<div style="left:196px;top:381.5px;width:1px;height:24px;background:#d2d7db;"></div>
<div style="left:302px;top:381.5px;width:1px;height:24px;background:#d2d7db;"></div>
<div style="left:391px;top:381.5px;width:1px;height:24px;background:#d2d7db;"></div>
<div style="left:453px;top:381.5px;width:1px;height:24px;background:#d2d7db;"></div>
<div style="left:605px;top:381.5px;width:1px;height:24px;background:#d2d7db;"></div>
<div style="left:694px;top:381.5px;width:1px;height:24px;background:#d2d7db;"></div>
<div style="left:791px;top:381.5px;width:1px;height:24px;background:#d2d7db;"></div>
<div style="left:880px;top:381.5px;width:1px;height:24px;background:#d2d7db;"></div>
<div style="left:969px;top:381.5px;width:1px;height:24px;background:#d2d7db;"></div>
<div style="left:1057px;top:381.5px;width:1px;height:24px;background:#d2d7db;"></div>
<div style="left:1155px;top:381.5px;width:1px;height:24px;background:#d2d7db;"></div>
<div style="left:1243px;top:381.5px;width:1px;height:24px;background:#d2d7db;"></div>
<div style="left:1331px;top:381.5px;width:1px;height:24px;background:#d2d7db;"></div>
<svg style="left:178px;top:382.500px" width="14" height="14" viewBox="0 0 14 14" fill="none"><rect x="1.700" y="1.700" width="10.400" height="10.300" rx="1.800" fill="rgba(255,255,255,0.600)" stroke="#4b97c3" stroke-width="1.400"/></svg>
<span style="left:200.62px;top:384.00px;font-size:9.6px;font-weight:400;color:#3f6db3;transform:scaleX(1.0525);transform-origin:0 0;">jdodkxb</span>
<span style="left:307.22px;top:384.00px;font-size:9.6px;font-weight:400;color:#3f6db3;transform:scaleX(1.0362);transform-origin:0 0;">none</span>
<span style="left:395.62px;top:384.00px;font-size:9.6px;font-weight:400;color:#222;transform:scaleX(1.0107);transform-origin:0 0;">universal</span>
<span style="left:457.87px;top:384.00px;font-size:9.6px;font-weight:400;color:#3f6db3;transform:scaleX(1.0362);transform-origin:0 0;">none</span>
<span style="left:610.37px;top:384.00px;font-size:9.6px;font-weight:400;color:#3f6db3;transform:scaleX(0.9707);transform-origin:0 0;">any</span>
<span style="left:698.37px;top:384.00px;font-size:9.6px;font-weight:400;color:#3f6db3;transform:scaleX(0.9707);transform-origin:0 0;">any</span>
<span style="left:796.42px;top:384.00px;font-size:9.6px;font-weight:400;color:#3f6db3;transform:scaleX(0.9707);transform-origin:0 0;">any</span>
<svg style="left:885px;top:386.4px" width="14.500" height="11" viewBox="0 0 14.500 11" fill="none"><rect x="0.700" y="0.700" width="11.400" height="7.300" rx="1.200" stroke="#2f7fa5" stroke-width="1.300" fill="#e3f0f6"/><path d="M1.200 6h10" stroke="#2f7fa5" stroke-width="0.900"/><path d="M4 10h5.500M6.700 8v2" stroke="#2f7fa5" stroke-width="1.200"/><circle cx="10.900" cy="6" r="3.200" fill="#5cb65a"/><path d="M9.400 6.100l1.100 1.100 1.800-2.300" stroke="#e9f7e8" stroke-width="0.900"/></svg>
<span style="left:902.42px;top:387.00px;font-size:9.6px;font-weight:400;color:#3f6db3;transform:scaleX(0.9825);transform-origin:0 0;">zajaclc</span>
<span style="left:972.87px;top:384.00px;font-size:9.6px;font-weight:400;color:#3f6db3;transform:scaleX(0.9707);transform-origin:0 0;">any</span>
<span style="left:1061.62px;top:384.00px;font-size:9.6px;font-weight:400;color:#3f6db3;transform:scaleX(0.9707);transform-origin:0 0;">any</span>
<span style="left:1159.37px;top:384.00px;font-size:9.6px;font-weight:400;color:#3f6db3;transform:scaleX(0.9707);transform-origin:0 0;">any</span>
<span style="left:1248.12px;top:384.00px;font-size:9.6px;font-weight:400;color:#3f6db3;transform:scaleX(0.9707);transform-origin:0 0;">any</span>
<svg style="left:1337.400px;top:386.3px" width="12.500" height="12" viewBox="0 0 12.500 12" fill="none"><path d="M2 10.200L7.600 4.600" stroke="#2f82a8" stroke-width="2.900" stroke-linecap="round"/><path d="M2 10.200L7.600 4.600" stroke="#d5e8f1" stroke-width="0.900" stroke-linecap="round"/><circle cx="9.100" cy="3" r="2.100" stroke="#2f82a8" stroke-width="1.400"/><path d="M2 2L4.800 4.800" stroke="#d6a73a" stroke-width="3.200" stroke-linecap="round"/><path d="M2 2L4.800 4.800" stroke="#f6e6bd" stroke-width="1" stroke-linecap="round"/><path d="M5.500 5.500L10.400 10.400" stroke="#d6a73a" stroke-width="2.100" stroke-linecap="round"/><path d="M6.500 6.500L10.200 10.200" stroke="#f6e6bd" stroke-width="0.600" stroke-linecap="round"/></svg>
<span style="left:1353.12px;top:387.00px;font-size:9.6px;font-weight:400;color:#3f6db3;transform:scaleX(1.0220);transform-origin:0 0;">application-...</span>
<div style="left:174px;top:407px;width:1247px;height:26px;background:#eef5f9;"></div>
<div style="left:174px;top:432px;width:1247px;height:1px;background:#fff;"></div>
<div style="left:196px;top:408.5px;width:1px;height:23px;background:#d2d7db;"></div>
<div style="left:302px;top:408.5px;width:1px;height:23px;background:#d2d7db;"></div>
<div style="left:391px;top:408.5px;width:1px;height:23px;background:#d2d7db;"></div>
<div style="left:453px;top:408.5px;width:1px;height:23px;background:#d2d7db;"></div>
<div style="left:605px;top:408.5px;width:1px;height:23px;background:#d2d7db;"></div>
<div style="left:694px;top:408.5px;width:1px;height:23px;background:#d2d7db;"></div>
<div style="left:791px;top:408.5px;width:1px;height:23px;background:#d2d7db;"></div>
<div style="left:880px;top:408.5px;width:1px;height:23px;background:#d2d7db;"></div>
<div style="left:969px;top:408.5px;width:1px;height:23px;background:#d2d7db;"></div>
<div style="left:1057px;top:408.5px;width:1px;height:23px;background:#d2d7db;"></div>
<div style="left:1155px;top:408.5px;width:1px;height:23px;background:#d2d7db;"></div>
<div style="left:1243px;top:408.5px;width:1px;height:23px;background:#d2d7db;"></div>
<div style="left:1331px;top:408.5px;width:1px;height:23px;background:#d2d7db;"></div>
<svg style="left:178px;top:409.200px" width="14" height="14" viewBox="0 0 14 14" fill="none"><rect x="1.700" y="1.700" width="10.400" height="10.300" rx="1.800" fill="rgba(255,255,255,0.600)" stroke="#4b97c3" stroke-width="1.400"/></svg>
<span style="left:200.62px;top:411.00px;font-size:9.6px;font-weight:400;color:#3f6db3;transform:scaleX(1.0956);transform-origin:0 0;">test-policy</span>
<span style="left:307.22px;top:411.00px;font-size:9.6px;font-weight:400;color:#3f6db3;transform:scaleX(1.0362);transform-origin:0 0;">none</span>
<span style="left:395.62px;top:411.00px;font-size:9.6px;font-weight:400;color:#222;transform:scaleX(1.0107);transform-origin:0 0;">universal</span>
<span style="left:457.87px;top:411.00px;font-size:9.6px;font-weight:400;color:#3f6db3;transform:scaleX(1.0674);transform-origin:0 0;">test-profile</span>
<span style="left:610.37px;top:411.00px;font-size:9.6px;font-weight:400;color:#3f6db3;transform:scaleX(0.9707);transform-origin:0 0;">any</span>
<span style="left:698.37px;top:411.00px;font-size:9.6px;font-weight:400;color:#3f6db3;transform:scaleX(0.9707);transform-origin:0 0;">any</span>
<span style="left:796.42px;top:411.00px;font-size:9.6px;font-weight:400;color:#3f6db3;transform:scaleX(0.9707);transform-origin:0 0;">any</span>
<span style="left:885.12px;top:411.00px;font-size:9.6px;font-weight:400;color:#3f6db3;transform:scaleX(0.9707);transform-origin:0 0;">any</span>
<span style="left:972.87px;top:411.00px;font-size:9.6px;font-weight:400;color:#3f6db3;transform:scaleX(0.9707);transform-origin:0 0;">any</span>
<span style="left:1061.62px;top:411.00px;font-size:9.6px;font-weight:400;color:#3f6db3;transform:scaleX(0.9707);transform-origin:0 0;">any</span>
<span style="left:1159.37px;top:411.00px;font-size:9.6px;font-weight:400;color:#3f6db3;transform:scaleX(0.9707);transform-origin:0 0;">any</span>
<span style="left:1248.12px;top:411.00px;font-size:9.6px;font-weight:400;color:#3f6db3;transform:scaleX(0.9707);transform-origin:0 0;">any</span>
<svg style="left:1337.400px;top:413.3px" width="12.500" height="12" viewBox="0 0 12.500 12" fill="none"><path d="M2 10.200L7.600 4.600" stroke="#2f82a8" stroke-width="2.900" stroke-linecap="round"/><path d="M2 10.200L7.600 4.600" stroke="#d5e8f1" stroke-width="0.900" stroke-linecap="round"/><circle cx="9.100" cy="3" r="2.100" stroke="#2f82a8" stroke-width="1.400"/><path d="M2 2L4.800 4.800" stroke="#d6a73a" stroke-width="3.200" stroke-linecap="round"/><path d="M2 2L4.800 4.800" stroke="#f6e6bd" stroke-width="1" stroke-linecap="round"/><path d="M5.500 5.500L10.400 10.400" stroke="#d6a73a" stroke-width="2.100" stroke-linecap="round"/><path d="M6.500 6.500L10.200 10.200" stroke="#f6e6bd" stroke-width="0.600" stroke-linecap="round"/></svg>
<span style="left:1353.12px;top:414.00px;font-size:9.6px;font-weight:400;color:#3f6db3;transform:scaleX(1.0220);transform-origin:0 0;">application-...</span>
<div style="left:174px;top:433px;width:1247px;height:36px;background:#fff1d1;"></div>
<div style="left:174px;top:468px;width:1247px;height:1px;background:#fff8ea;"></div>
<div style="left:196px;top:434.5px;width:1px;height:33px;background:#e3d6b6;"></div>
<div style="left:302px;top:434.5px;width:1px;height:33px;background:#e3d6b6;"></div>
<div style="left:391px;top:434.5px;width:1px;height:33px;background:#e3d6b6;"></div>
<div style="left:453px;top:434.5px;width:1px;height:33px;background:#e3d6b6;"></div>
<div style="left:605px;top:434.5px;width:1px;height:33px;background:#e3d6b6;"></div>
<div style="left:694px;top:434.5px;width:1px;height:33px;background:#e3d6b6;"></div>
<div style="left:791px;top:434.5px;width:1px;height:33px;background:#e3d6b6;"></div>
<div style="left:880px;top:434.5px;width:1px;height:33px;background:#e3d6b6;"></div>
<div style="left:969px;top:434.5px;width:1px;height:33px;background:#e3d6b6;"></div>
<div style="left:1057px;top:434.5px;width:1px;height:33px;background:#e3d6b6;"></div>
<div style="left:1155px;top:434.5px;width:1px;height:33px;background:#e3d6b6;"></div>
<div style="left:1243px;top:434.5px;width:1px;height:33px;background:#e3d6b6;"></div>
<div style="left:1331px;top:434.5px;width:1px;height:33px;background:#e3d6b6;"></div>
<svg style="left:178px;top:437.600px" width="14" height="14" viewBox="0 0 14 14" fill="none"><rect x="1.700" y="1.700" width="10.400" height="10.300" rx="1.800" fill="rgba(255,255,255,0.600)" stroke="#4b97c3" stroke-width="1.400"/></svg>
<span style="left:200.62px;top:439.00px;font-size:9.6px;font-weight:400;color:#3f6db3;transform:scaleX(1.0398);transform-origin:0 0;">intrazone-default</span>
<span style="left:307.22px;top:439.00px;font-size:9.6px;font-weight:400;color:#3f6db3;transform:scaleX(1.0362);transform-origin:0 0;">none</span>
<span style="left:395.62px;top:439.00px;font-size:9.6px;font-weight:400;color:#222;transform:scaleX(1.0107);transform-origin:0 0;">universal</span>
<span style="left:457.87px;top:439.00px;font-size:9.6px;font-weight:400;color:#3f6db3;transform:scaleX(1.0362);transform-origin:0 0;">none</span>
<span style="left:610.37px;top:439.00px;font-size:9.6px;font-weight:400;color:#3f6db3;transform:scaleX(1.0362);transform-origin:0 0;">none</span>
<span style="left:698.37px;top:439.00px;font-size:9.6px;font-weight:400;color:#3f6db3;transform:scaleX(1.0362);transform-origin:0 0;">none</span>
<span style="left:796.42px;top:439.00px;font-size:9.6px;font-weight:400;color:#3f6db3;transform:scaleX(0.9707);transform-origin:0 0;">any</span>
<span style="left:885.12px;top:439.00px;font-size:9.6px;font-weight:400;color:#3f6db3;transform:scaleX(0.9707);transform-origin:0 0;">any</span>
<span style="left:972.87px;top:439.00px;font-size:9.6px;font-weight:400;color:#3f6db3;transform:scaleX(1.0362);transform-origin:0 0;">none</span>
<span style="left:1061.62px;top:439.00px;font-size:9.6px;font-weight:400;color:#3f6db3;transform:scaleX(1.0362);transform-origin:0 0;">none</span>
<span style="left:1159.37px;top:439.00px;font-size:9.6px;font-weight:400;color:#3f6db3;transform:scaleX(0.9707);transform-origin:0 0;">any</span>
<span style="left:1248.12px;top:439.00px;font-size:9.6px;font-weight:400;color:#3f6db3;transform:scaleX(1.0362);transform-origin:0 0;">none</span>
<span style="left:1337.12px;top:439.00px;font-size:9.6px;font-weight:400;color:#3f6db3;transform:scaleX(1.0362);transform-origin:0 0;">none</span>
<svg style="left:269.400px;top:451.4px" width="9" height="9" viewBox="0 0 9 9"><circle cx="4.500" cy="4.500" r="3.300" fill="#52b155"/><circle cx="4.500" cy="4.500" r="3.700" fill="none" stroke="#52b155" stroke-width="1.300" stroke-dasharray="1.500 1.400"/><circle cx="4.500" cy="4.500" r="2" fill="none" stroke="#8fd091" stroke-width="0.500"/></svg>
<div style="left:174px;top:469px;width:1247px;height:35px;background:#ffe9b3;"></div>
<div style="left:174px;top:503px;width:1247px;height:1px;background:#fff;"></div>
<div style="left:196px;top:470.5px;width:1px;height:32px;background:#e3d6b6;"></div>
<div style="left:302px;top:470.5px;width:1px;height:32px;background:#e3d6b6;"></div>
<div style="left:391px;top:470.5px;width:1px;height:32px;background:#e3d6b6;"></div>
<div style="left:453px;top:470.5px;width:1px;height:32px;background:#e3d6b6;"></div>
<div style="left:605px;top:470.5px;width:1px;height:32px;background:#e3d6b6;"></div>
<div style="left:694px;top:470.5px;width:1px;height:32px;background:#e3d6b6;"></div>
<div style="left:791px;top:470.5px;width:1px;height:32px;background:#e3d6b6;"></div>
<div style="left:880px;top:470.5px;width:1px;height:32px;background:#e3d6b6;"></div>
<div style="left:969px;top:470.5px;width:1px;height:32px;background:#e3d6b6;"></div>
<div style="left:1057px;top:470.5px;width:1px;height:32px;background:#e3d6b6;"></div>
<div style="left:1155px;top:470.5px;width:1px;height:32px;background:#e3d6b6;"></div>
<div style="left:1243px;top:470.5px;width:1px;height:32px;background:#e3d6b6;"></div>
<div style="left:1331px;top:470.5px;width:1px;height:32px;background:#e3d6b6;"></div>
<svg style="left:178px;top:472.600px" width="14" height="14" viewBox="0 0 14 14" fill="none"><rect x="1.700" y="1.700" width="10.400" height="10.300" rx="1.800" fill="rgba(255,255,255,0.600)" stroke="#4b97c3" stroke-width="1.400"/></svg>
<span style="left:200.62px;top:473.00px;font-size:9.6px;font-weight:400;color:#3f6db3;transform:scaleX(1.0398);transform-origin:0 0;">interzone-default</span>
<span style="left:307.22px;top:473.00px;font-size:9.6px;font-weight:400;color:#3f6db3;transform:scaleX(1.0362);transform-origin:0 0;">none</span>
<span style="left:395.62px;top:473.00px;font-size:9.6px;font-weight:400;color:#222;transform:scaleX(1.0107);transform-origin:0 0;">universal</span>
<span style="left:457.87px;top:473.00px;font-size:9.6px;font-weight:400;color:#3f6db3;transform:scaleX(1.0362);transform-origin:0 0;">none</span>
<span style="left:610.37px;top:473.00px;font-size:9.6px;font-weight:400;color:#3f6db3;transform:scaleX(1.0362);transform-origin:0 0;">none</span>
<span style="left:698.37px;top:473.00px;font-size:9.6px;font-weight:400;color:#3f6db3;transform:scaleX(1.0362);transform-origin:0 0;">none</span>
<span style="left:796.42px;top:473.00px;font-size:9.6px;font-weight:400;color:#3f6db3;transform:scaleX(0.9707);transform-origin:0 0;">any</span>
<span style="left:885.12px;top:473.00px;font-size:9.6px;font-weight:400;color:#3f6db3;transform:scaleX(0.9707);transform-origin:0 0;">any</span>
<span style="left:972.87px;top:473.00px;font-size:9.6px;font-weight:400;color:#3f6db3;transform:scaleX(1.0362);transform-origin:0 0;">none</span>
<span style="left:1061.62px;top:473.00px;font-size:9.6px;font-weight:400;color:#3f6db3;transform:scaleX(1.0362);transform-origin:0 0;">none</span>
<span style="left:1159.37px;top:473.00px;font-size:9.6px;font-weight:400;color:#3f6db3;transform:scaleX(0.9707);transform-origin:0 0;">any</span>
<span style="left:1248.12px;top:473.00px;font-size:9.6px;font-weight:400;color:#3f6db3;transform:scaleX(1.0362);transform-origin:0 0;">none</span>
<span style="left:1337.12px;top:473.00px;font-size:9.6px;font-weight:400;color:#3f6db3;transform:scaleX(1.0362);transform-origin:0 0;">none</span>
<svg style="left:269.400px;top:486.5px" width="9" height="9" viewBox="0 0 9 9"><circle cx="4.500" cy="4.500" r="3.300" fill="#52b155"/><circle cx="4.500" cy="4.500" r="3.700" fill="none" stroke="#52b155" stroke-width="1.300" stroke-dasharray="1.500 1.400"/><circle cx="4.500" cy="4.500" r="2" fill="none" stroke="#8fd091" stroke-width="0.500"/></svg>
<div style="left:174px;top:273px;width:1247px;height:1.2px;background:#4fa3d0;"></div>
<div style="left:174px;top:299px;width:1247px;height:1.2px;background:#4fa3d0;"></div>
<div style="left:174px;top:433px;width:1247px;height:1px;background:#f3b63a;"></div>
<div style="left:174px;top:509px;width:1262px;height:25px;background:#fafbfb;"></div>
<div style="left:174px;top:509px;width:1262px;height:1px;background:#d4d5d8;"></div>
<svg style="left:181px;top:518px" width="10.300" height="10.700" viewBox="0 0 10 10.500"><rect width="10" height="10.500" rx="1.200" fill="#2a7cab"/><path d="M2.600 7.900l0.400-1.700 3.500-3.500 1.300 1.300-3.500 3.500z" fill="#fff"/></svg>
<span style="left:196.98px;top:517.00px;font-size:10.4px;font-weight:400;color:#666;transform:scaleX(1.0073);transform-origin:0 0;">Attach Log Forwarding Profile</span>
<svg style="left:346px;top:515.500px" width="13" height="14" viewBox="0 0 14 14" fill="none" stroke="#4a9bd0" stroke-width="1.100"><circle cx="7" cy="7" r="6.200"/><rect x="4.200" y="3.600" width="5.600" height="4.600" rx="0.800"/><path d="M3.600 10.200c1-1.600 5.800-1.600 6.800 0"/></svg>
<span style="left:362.58px;top:517.00px;font-size:10.4px;font-weight:400;color:#666;transform:scaleX(0.9897);transform-origin:0 0;">PDF/CSV</span>
<svg style="left:296px;top:181px" width="163" height="20" viewBox="0 0 163 20" fill="none"><rect x="1.600" y="1.550" width="159.200" height="16.900" rx="2" fill="#fff" stroke="#1fa5e3" stroke-width="1.400"/><path d="M143.500 2.300v15.400" stroke="#dbe9f2" stroke-width="1"/><path d="M146.600 8.300L150.800 12.600L155 8.300" stroke="#1fa5e3" stroke-width="1.100"/></svg>
<div style="left:303px;top:185px;width:11px;height:11.8px;background:#2d87f8;"></div>
<span style="left:303.22px;top:186.00px;font-size:9.6px;font-weight:400;color:#fff;transform:scaleX(0.9948);transform-origin:0 0;">All</span>
<div style="left:297px;top:200px;width:158px;height:66px;background:#fff;border:1px solid #c6c9cc;border-top-color:#e4e6e8;box-shadow:0 1px 2px rgba(0,0,0,0.220);border-radius:1px"></div>
<div style="left:298px;top:203.8px;width:138px;height:20px;background:#e4f1fb;"></div>
<span style="left:306.22px;top:209.00px;font-size:9.6px;font-weight:400;color:#222;transform:scaleX(1.1353);transform-origin:0 0;">All</span>
<span style="left:306.22px;top:229.00px;font-size:9.6px;font-weight:400;color:#333;transform:scaleX(1.0514);transform-origin:0 0;">None</span>
<span style="left:306.22px;top:249.00px;font-size:9.6px;font-weight:400;color:#333;transform:scaleX(0.9998);transform-origin:0 0;">IoT Security Default Profile...</span>
<div style="left:436px;top:203.8px;width:20px;height:58.8px;background:#f1f1f1;"></div>
<div style="left:438px;top:224.3px;width:16px;height:18.3px;background:#c1c1c1;"></div>
<svg style="left:441px;top:212px" width="10" height="5" viewBox="0 0 10 5"><path d="M0 5h10L5 0z" fill="#a3a3a3"/></svg>
<svg style="left:441px;top:250px" width="10" height="5" viewBox="0 0 10 5"><path d="M0 0h10L5 5z" fill="#505050"/></svg>
<svg style="left:23px;top:80.5px" width="11" height="8.2" viewBox="0 0 11 8.2" fill="none"><rect x="0.600" y="0.600" width="9.800" height="7" rx="1.200" fill="#f6c5c8" stroke="#d24a54" stroke-width="1.100"/><path d="M1 4.100h9" stroke="#d24a54" stroke-width="0.900"/><path d="M3.700 1.800v1.500M7.300 1.800v1.500M5.500 5v1.500M2.600 5v1.500M8.400 5v1.500" stroke="#dc6f77" stroke-width="0.800"/></svg>
<svg style="left:22.5px;top:97px" width="13" height="11" viewBox="0 0 13 11" fill="none"><path d="M0.5 1h5.2a2 2 0 0 1 2 2v5a2 2 0 0 1 -2 2H0.5M0.5 5.5H12M9 2.6L12 5.5L9 8.4" stroke="#3a93c8" stroke-width="1.1"/></svg>
<svg style="left:22px;top:112.5px" width="14" height="14.5" viewBox="0 0 14 14.5" fill="none"><circle cx="7.300" cy="2.700" r="2.400" fill="#1d6a96"/><path d="M3.600 7.600L5.300 4.600H9.300L11 7.600Z" fill="#1d6a96"/><rect x="6" y="7.400" width="2.600" height="1.400" fill="#1d6a96"/><path d="M5 6.200h4.600" stroke="#d4e6f0" stroke-width="0.700"/><text x="1" y="13.300" font-family="Liberation Sans, sans-serif" font-size="6.400" font-weight="700" fill="#d6a72e" textLength="12.100" lengthAdjust="spacingAndGlyphs">QoS</text></svg>
<svg style="left:22px;top:129.5px" width="15" height="15" viewBox="0 0 15 15" fill="none"><rect x="0.600" y="0.600" width="8.800" height="9.800" rx="0.800" fill="#e6f2f8" stroke="#2d7ea8" stroke-width="1.2"/><path d="M2 3.200h6" stroke="#3fae49" stroke-width="1.600"/><path d="M2 7.200h6" stroke="#d24a54" stroke-width="1.600"/><path d="M2 5.200h6" stroke="#9cc6dc" stroke-width="0.800"/><circle cx="9.800" cy="10" r="4" fill="#1f86c0"/><path d="M9.800 6v8M5.800 10h8M7.300 7a4.500 4.500 0 0 1 0 6M12.300 7a4.500 4.500 0 0 0 0 6" stroke="#dff0fa" stroke-width="0.700"/></svg>
<svg style="left:24px;top:149.5px" width="10" height="11" viewBox="0 0 10 11" fill="none"><rect x="2.200" y="4.300" width="7.200" height="6" rx="0.800" stroke="#d8a83a" stroke-width="1.200" fill="#fdf6e3"/><path d="M0.700 4.300V3a2 2 0 0 1 4 0v1.300" stroke="#d8a83a" stroke-width="1.100"/><circle cx="5.800" cy="7.300" r="1.100" fill="#d8a83a"/></svg>
<svg style="left:22px;top:165.5px" width="14" height="13.5" viewBox="0 0 14 13.5" fill="none"><circle cx="8" cy="3.300" r="2.300" stroke="#d8a83a" stroke-width="1.100" fill="#fdf6e3"/><path d="M2.800 6.200h8.600a1.800 3.300 0 0 1 0 6.600H2.800a1.800 3.300 0 0 1 0 -6.600a1.800 3.300 0 0 1 0 6.600" stroke="#2a7fa8" stroke-width="1.200" fill="#f4fafc"/><path d="M4.300 9.300a3.700 3.700 0 0 1 7.400 0" stroke="#d8a83a" stroke-width="1.100"/></svg>
<svg style="left:24.5px;top:184.5px" width="10" height="10.5" viewBox="0 0 10 10.5" fill="none"><rect x="0.600" y="0.600" width="8.800" height="9.300" rx="0.600" fill="#e6f2f8" stroke="#2d7ea8" stroke-width="1.200"/><path d="M2 3h6" stroke="#3fae49" stroke-width="1.300"/><path d="M2 5.300h6" stroke="#2d7ea8" stroke-width="1.300"/><path d="M2 7.600h6" stroke="#d24a54" stroke-width="1.300"/></svg>
<svg style="left:21.5px;top:201px" width="15" height="13.5" viewBox="0 0 15 13.5" fill="none"><circle cx="4.700" cy="2.800" r="2.200" stroke="#e8603c" stroke-width="1.100"/><rect x="0.700" y="7" width="8" height="4.200" rx="0.800" stroke="#e8603c" stroke-width="1.100"/><path d="M12.700 2.500l-3 9" stroke="#2a86c0" stroke-width="2.800" stroke-linecap="round"/><path d="M12.700 2.500l-3 9" stroke="#eef6fb" stroke-width="0.900" stroke-linecap="round"/><path d="M11.300 0.800l0.800 2.400 2.300-0.500" stroke="#2a86c0" stroke-width="1"/></svg>
<svg style="left:21.5px;top:219px" width="15" height="14" viewBox="0 0 15 14" fill="none"><path d="M5 0.800l-4.200 1.400v4.600c0 3 2 5 4.700 6.300 1.400-0.700 2.600-1.600 3.400-2.700" stroke="#1f5f8a" stroke-width="1.100"/><path d="M5 0.800l3 1" stroke="#1f5f8a" stroke-width="1.100"/><path d="M7.800 1.500v10M5.500 3.300H14M5.500 6.500H14M5.500 9.700H14" stroke="#c8424e" stroke-width="1"/><path d="M6.300 5.500l-1 1 1 1M6.300 8.700l-1 1 1 1" stroke="#c8424e" stroke-width="0.800"/></svg>
<svg style="left:21.5px;top:235.5px" width="15.5" height="14.5" viewBox="0 0 15.5 14.5" fill="none"><circle cx="5.900" cy="5.700" r="5.300" fill="#3aa648"/><path d="M8.500 3.500c-2.500 0-4 1-4.500 3M2.800 5l1.200 1.800 1.900-1" stroke="#e7f6e8" stroke-width="1.100"/><rect x="8.600" y="7.200" width="6.200" height="4.300" rx="0.700" fill="#e8f4fb" stroke="#2a86c0" stroke-width="1.100"/><path d="M10 13.500h3.500M11.700 11.500v2" stroke="#2a86c0" stroke-width="1"/></svg>
<svg style="left:22px;top:293.5px" width="14.5" height="13.5" viewBox="0 0 14.5 13.5" fill="none"><rect x="0.700" y="0.700" width="11.600" height="9.800" rx="0.900" fill="#fff" stroke="#1f6f9f" stroke-width="1.200"/><path d="M0.700 1.600h11.600" stroke="#1f6f9f" stroke-width="2"/><circle cx="10.800" cy="10.300" r="2.900" fill="#cc3340"/><path d="M9.300 10.300h3" stroke="#fff" stroke-width="0.900"/></svg>
<svg style="left:22px;top:311.8px" width="14.5" height="13.5" viewBox="0 0 14.5 13.5" fill="none"><rect x="0.700" y="0.700" width="11.600" height="9.800" rx="0.900" fill="#fff" stroke="#1f6f9f" stroke-width="1.200"/><path d="M0.700 1.600h11.600" stroke="#1f6f9f" stroke-width="2"/><circle cx="10.800" cy="10.300" r="2.900" fill="#cc3340"/><path d="M9.300 10.300h3" stroke="#fff" stroke-width="0.900"/></svg>
<svg style="left:22px;top:329px" width="14.5" height="13.5" viewBox="0 0 14.5 13.5" fill="none"><rect x="0.700" y="0.700" width="11.600" height="9.800" rx="0.900" fill="#fff" stroke="#1f6f9f" stroke-width="1.200"/><path d="M0.700 1.600h11.600" stroke="#1f6f9f" stroke-width="2"/><path d="M8.800 3l4.300 8.800H4.500z" fill="#fffbe9" stroke="#d8a830" stroke-width="1.100" stroke-linejoin="round"/><path d="M8.800 6v3.200" stroke="#d8a830" stroke-width="0.900"/></svg>
<svg style="left:22px;top:347px" width="14.5" height="12.5" viewBox="0 0 14.5 12.5" fill="none"><rect x="0.700" y="0.700" width="9.600" height="10.600" rx="0.900" fill="#eef6fa" stroke="#2a7fa8" stroke-width="1.200"/><path d="M2.300 3.200h6.400M2.300 5.300h6.400M2.300 7.400h6.400M2.300 9.400h3M4.600 3.200v6.200" stroke="#2a7fa8" stroke-width="0.900"/><path d="M6 10h5.500" stroke="#3fae49" stroke-width="1.500"/><path d="M11 8.200l2.600 1.800-2.600 1.800z" fill="#3fae49"/></svg>
<svg style="left:21.5px;top:364px" width="14.5" height="14" viewBox="0 0 14.500 15" fill="none"><path d="M0.800 2.6l1.300 1.200 2-3.200" stroke="#3a93c8" stroke-width="1"/><path d="M6 1.8h8" stroke="#3a93c8" stroke-width="1.200"/><path d="M0.800 7.9l1.300 1.200 2-3.200" stroke="#3a93c8" stroke-width="1"/><path d="M6 7.1h8" stroke="#3a93c8" stroke-width="1.200"/><path d="M0.800 13.2l1.300 1.200 2-3.200" stroke="#3a93c8" stroke-width="1"/><path d="M6 12.4h8" stroke="#3a93c8" stroke-width="1.200"/></svg>
<svg style="left:40px;top:382px" width="14.5" height="14.5" viewBox="0 0 14.5 14.5" fill="none"><rect x="0.700" y="0.700" width="8.800" height="9" rx="0.800" fill="#f6fafc" stroke="#2a7fa8" stroke-width="1.200"/><path d="M2.200 3.100h5.800M2.200 5.100h5.800M2.200 7.100h3" stroke="#5b9dbd" stroke-width="0.800"/><circle cx="8.800" cy="8.800" r="4.600" fill="#fff" stroke="#d9434e" stroke-width="1.300"/><path d="M5.600 5.600l6.400 6.400" stroke="#d9434e" stroke-width="1.300"/></svg>
<svg style="left:40px;top:399.3px" width="14.5" height="14.5" viewBox="0 0 14.5 14.5" fill="none"><rect x="0.700" y="0.700" width="8.800" height="9" rx="0.800" fill="#f6fafc" stroke="#2a7fa8" stroke-width="1.200"/><path d="M2.200 3.100h5.800M2.200 5.100h5.800M2.200 7.100h3" stroke="#5b9dbd" stroke-width="0.800"/><circle cx="8.800" cy="8.800" r="4.600" fill="#fff" stroke="#d9434e" stroke-width="1.300"/><path d="M5.600 5.600l6.400 6.400" stroke="#d9434e" stroke-width="1.300"/></svg>
<svg style="left:40px;top:416.6px" width="14.5" height="14.5" viewBox="0 0 14.5 14.5" fill="none"><rect x="0.700" y="0.700" width="8.800" height="9" rx="0.800" fill="#f6fafc" stroke="#2a7fa8" stroke-width="1.200"/><path d="M2.200 3.100h5.800M2.200 5.100h5.800M2.200 7.100h3" stroke="#5b9dbd" stroke-width="0.800"/><circle cx="8.800" cy="8.800" r="4.600" fill="#fff" stroke="#d9434e" stroke-width="1.300"/><path d="M5.600 5.600l6.400 6.400" stroke="#d9434e" stroke-width="1.300"/></svg>
<div style="left:174px;top:285px;width:2.5px;height:30px;background:rgba(190,195,200,0.150);border-right:1px solid rgba(150,155,160,0.250)"></div>
<svg style="left:173.8px;top:298px" width="4" height="5" viewBox="0 0 4 5" fill="none"><path d="M0.300 2.500h3.500M1.800 0.800L0.300 2.500L1.800 4.200" stroke="#888" stroke-width="0.700"/></svg>
</div></body></html>
